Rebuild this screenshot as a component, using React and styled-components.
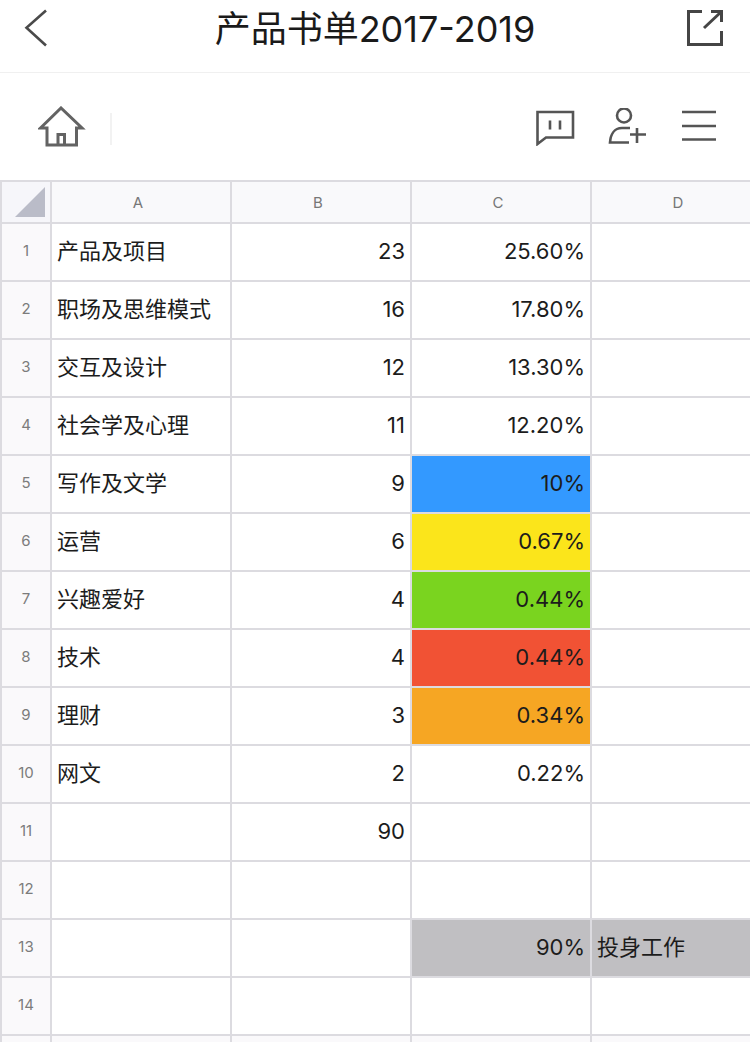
import React from "react";
import styled, { createGlobalStyle } from "styled-components";

const GlobalStyle = createGlobalStyle`
  html, body {
    margin: 0;
    padding: 0;
    background: #ffffff;
  }
  body {
    font-family: Inter, "Noto Sans CJK SC", sans-serif;
    overflow: hidden;
  }
`;

const Page = styled.div`
  width: 750px;
  height: 1042px;
  overflow: hidden;
`;

const TitleBar = styled.div`
  height: 56px;
  border-bottom: 1px solid #f0f0f0;
  display: flex;
  align-items: center;
  justify-content: space-between;
  padding: 0 26px 16px 24px;
`;

const Title = styled.div`
  font-size: 36px;
  color: #1a1a1a;
  line-height: 56px;
  margin-left: 16px;
  padding-top: 2px;
`;

const Toolbar = styled.div`
  height: 107px;
  display: flex;
  align-items: center;
  padding: 0 34px 0 38px;
`;

const Divider = styled.div`
  width: 2px;
  height: 32px;
  background: #f2f2f2;
  margin-left: 24px;
  margin-top: 4px;
`;

const ToolGroup = styled.div`
  margin-left: auto;
  display: flex;
  align-items: center;
  gap: 32px;
`;

const Sheet = styled.div`
  display: grid;
  grid-template-columns: 48px 178px 178px 178px 178px;
  grid-template-rows: 40px repeat(14, 56px) 10px;
  gap: 2px;
  padding: 2px 0 0 2px;
  background: #dcdbe0;
`;

const Corner = styled.div`
  background: #f6f6fa;
  display: flex;
  align-items: flex-end;
  justify-content: flex-end;
  padding: 0 5px 5px 0;
`;

const ColHead = styled.div`
  background: #f9f9fb;
  color: #777777;
  font-size: 15px;
  display: flex;
  align-items: center;
  justify-content: center;
  padding: 0 6px 0 0;
`;

const RowHead = styled.div`
  background: #faf9fb;
  color: #7c7c7c;
  font-size: 15px;
  display: flex;
  align-items: center;
  justify-content: center;
  padding-bottom: 4px;
`;

const Cell = styled.div`
  background: ${(p) => p.$fill || "#ffffff"};
  color: #1c1c1c;
  font-size: 22px;
  display: flex;
  align-items: center;
  justify-content: ${(p) => (p.$right ? "flex-end" : "flex-start")};
  padding: 0 5px ${(p) => (p.$right ? "2px" : "6px")};
  white-space: nowrap;
`;

const rows = [
  { name: "产品及项目", count: "23", pct: "25.60%" },
  { name: "职场及思维模式", count: "16", pct: "17.80%" },
  { name: "交互及设计", count: "12", pct: "13.30%" },
  { name: "社会学及心理", count: "11", pct: "12.20%" },
  { name: "写作及文学", count: "9", pct: "10%", fill: "#3399ff" },
  { name: "运营", count: "6", pct: "0.67%", fill: "#fbe51b" },
  { name: "兴趣爱好", count: "4", pct: "0.44%", fill: "#7ad41f" },
  { name: "技术", count: "4", pct: "0.44%", fill: "#f15234" },
  { name: "理财", count: "3", pct: "0.34%", fill: "#f6a623" },
  { name: "网文", count: "2", pct: "0.22%" },
  { count: "90" },
  {},
  { pct: "90%", fill: "#c0bfc2", note: "投身工作", noteFill: "#c0bfc2" },
  {},
];

const BackIcon = () => (
  <svg width="24" height="38" viewBox="0 0 24 38" fill="none" stroke="#4a4a4a" strokeWidth="2.6">
    <path d="M22 1.5 L2.5 18.8 L22 36.5" />
  </svg>
);

const ShareIcon = () => (
  <svg width="38" height="38" viewBox="0 0 38 38" fill="none" stroke="#454545" strokeWidth="3">
    <path d="M16 2.5 H2.5 V35.5 H35.5 V22" />
    <path d="M18 19 L35 3 M25 2.5 H35.5 V13" />
  </svg>
);

const HomeIcon = () => (
  <svg width="48" height="42" viewBox="0 0 48 42" fill="none" stroke="#636363" strokeWidth="3">
    <path d="M2.5 22 L23 2 L44 22 H38.5 V39 H9 V22 Z" />
    <path d="M20 39 V28.5 H26.5 V39" />
  </svg>
);

const CommentIcon = () => (
  <svg width="40" height="38" viewBox="0 0 40 38" fill="none" stroke="#555555" strokeWidth="2.6">
    <path d="M1.5 4 H37 V29.5 H10 L1.5 36 Z" />
    <path d="M14 12.5 V21.5 M24 12.5 V21.5" />
  </svg>
);

const AddUserIcon = () => (
  <svg width="42" height="38" viewBox="0 0 42 38" fill="none" stroke="#555555" strokeWidth="2.6">
    <circle cx="16" cy="7.5" r="7" />
    <path d="M22 20 H14 C6 20 2.5 27 2 34.5 H21" />
    <path d="M22 26.5 H38 M29 20 V35" />
  </svg>
);

const MenuIcon = () => (
  <svg width="34" height="34" viewBox="0 0 34 34" fill="none" stroke="#555555" strokeWidth="2.6">
    <path d="M0 2 H34 M0 16 H34 M0 29.5 H34" />
  </svg>
);

export default function App() {
  return (
    <Page>
      <GlobalStyle />
      <TitleBar>
        <BackIcon />
        <Title>产品书单2017-2019</Title>
        <ShareIcon />
      </TitleBar>
      <Toolbar>
        <HomeIcon />
        <Divider />
        <ToolGroup>
          <CommentIcon />
          <AddUserIcon />
          <MenuIcon />
        </ToolGroup>
      </Toolbar>
      <Sheet>
        <Corner>
          <svg width="30" height="30" viewBox="0 0 30 30">
            <path d="M30 0 V30 H0 Z" fill="#babcc8" />
          </svg>
        </Corner>
        {["A", "B", "C", "D"].map((c) => (
          <ColHead key={c}>{c}</ColHead>
        ))}
        {rows.map((r, i) => (
          <React.Fragment key={i}>
            <RowHead>{i + 1}</RowHead>
            <Cell>{r.name}</Cell>
            <Cell $right>{r.count}</Cell>
            <Cell $right $fill={r.fill}>{r.pct}</Cell>
            <Cell $fill={r.noteFill}>{r.note}</Cell>
          </React.Fragment>
        ))}
        {[0, 1, 2, 3, 4].map((k) => (
          <RowHead key={k} />
        ))}
      </Sheet>
    </Page>
  );
}
